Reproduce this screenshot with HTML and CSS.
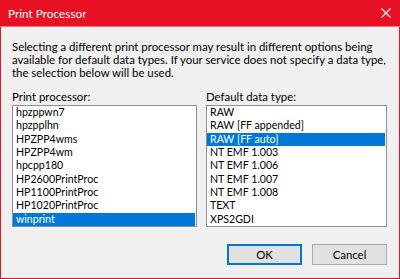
FILE: index.html
```html
<!DOCTYPE html>
<html>
<head>
<meta charset="utf-8">
<link rel="stylesheet" href="styles.css">
</head>
<body>
<div class="window">
  <div class="titlebar">
    <span class="title">Print Processor</span>
    <svg class="close" width="10" height="10" viewBox="0 0 10 10"><path d="M0.5 0.5 L9.5 9.5 M9.5 0.5 L0.5 9.5" stroke="#fff" stroke-width="1.1" fill="none"/></svg>
  </div>
  <div class="content">
    <p class="desc">Selecting a different print processor may result in different options being available for default data types. If your service does not specify a data type, the selection below will be used.</p>
    <div class="lists">
      <div class="col">
        <div class="label">Print processor:</div>
        <ul class="listbox">
          <li>hpzppwn7</li>
          <li>hpzpplhn</li>
          <li>HPZPP4wms</li>
          <li>HPZPP4wm</li>
          <li>hpcpp180</li>
          <li>HP2600PrintProc</li>
          <li>HP1100PrintProc</li>
          <li>HP1020PrintProc</li>
          <li class="sel">winprint</li>
        </ul>
      </div>
      <div class="col">
        <div class="label">Default data type:</div>
        <ul class="listbox">
          <li>RAW</li>
          <li>RAW [FF appended]</li>
          <li class="sel">RAW [FF auto]</li>
          <li>NT EMF 1.003</li>
          <li>NT EMF 1.006</li>
          <li>NT EMF 1.007</li>
          <li>NT EMF 1.008</li>
          <li>TEXT</li>
          <li>XPS2GDI</li>
        </ul>
      </div>
    </div>
    <div class="buttons">
      <button class="btn default">OK</button>
      <button class="btn">Cancel</button>
    </div>
  </div>
</div>
</body>
</html>
```
FILE: styles.css
```css
html, body {
  margin: 0;
  padding: 0;
}
body {
  font-family: Lato, "Noto Sans", sans-serif;
  font-size: 11.4px;
  color: #000;
}
.window {
  width: 400px;
  height: 279px;
  box-sizing: border-box;
  border: 1px solid #e81123;
  border-top: none;
  background: #f0f0f0;
  display: flex;
  flex-direction: column;
}
.titlebar {
  height: 26px;
  background: #e81123;
  border-bottom: 1px solid #f3737d;
  margin: 0 -1px;
  display: flex;
  align-items: center;
  justify-content: space-between;
  padding: 0 9px 0 8px;
  color: #fff;
  flex: none;
}
.title {
  font-size: 11.8px;
}
.close {
  display: block;
}
.content {
  padding: 0 12px 0 11px;
  display: flex;
  flex-direction: column;
}
.desc {
  margin: 13px 0 0 0;
  line-height: 13px;
}
.lists {
  margin-top: 11px;
  display: grid;
  grid-template-columns: 185px 181px;
  column-gap: 9px;
}
.label {
  line-height: 13px;
  height: 15px;
}
.listbox {
  list-style: none;
  margin: 0;
  padding: 0;
  height: 122px;
  box-sizing: border-box;
  border: 1px solid #8e8f8f;
  background: #fff;
  overflow: hidden;
  font-size: 10.6px;
}
.listbox li {
  height: 13.33px;
  line-height: 13.33px;
  padding-left: 3px;
  margin-right: 1px;
  white-space: nowrap;
  overflow: hidden;
}
.listbox li.sel {
  background: #0078d7;
  color: #fff;
}
.buttons {
  margin-top: 17px;
  display: flex;
  justify-content: flex-end;
  gap: 10px;
}
.btn {
  width: 75px;
  height: 21px;
  box-sizing: border-box;
  border: 1px solid #adadad;
  background: #e1e1e1;
  font-family: inherit;
  font-size: 11.4px;
  color: #000;
  padding: 0;
}
.btn.default {
  border: 2px solid #0078d7;
}
```
